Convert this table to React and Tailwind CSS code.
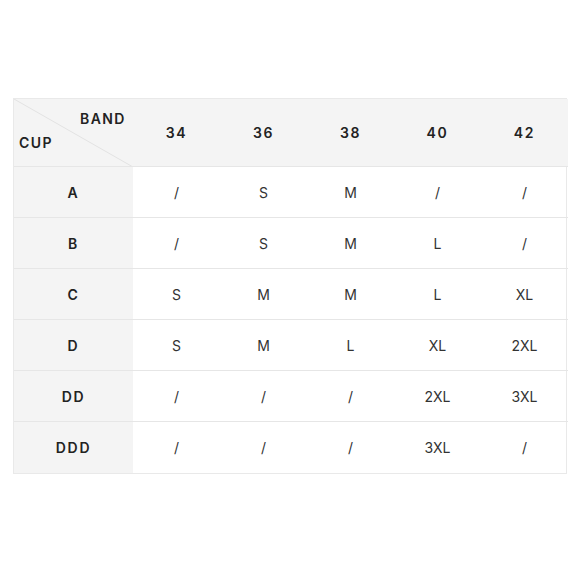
const bands = ['34', '36', '38', '40', '42']

const rows = [
  { cup: 'A', sizes: ['/', 'S', 'M', '/', '/'] },
  { cup: 'B', sizes: ['/', 'S', 'M', 'L', '/'] },
  { cup: 'C', sizes: ['S', 'M', 'M', 'L', 'XL'] },
  { cup: 'D', sizes: ['S', 'M', 'L', 'XL', '2XL'] },
  { cup: 'DD', sizes: ['/', '/', '/', '2XL', '3XL'] },
  { cup: 'DDD', sizes: ['/', '/', '/', '3XL', '/'] },
]

export default function App() {
  return (
    <div className="w-[580px] h-[580px] bg-white pt-[98px] pl-[13px] font-['Inter',sans-serif]">
      <div className="w-[554px] border border-[#e9e9e9] grid grid-cols-[119px_repeat(5,87px)]">
        {/* header */}
        <div className="relative h-[68px] bg-[#f4f4f4] border-b border-[#e6e6e6] overflow-hidden">
          <svg className="absolute inset-0" width="119" height="68" viewBox="0 0 119 68">
            <line x1="0" y1="0" x2="119" y2="68" stroke="#e2e2e2" strokeWidth="1" />
          </svg>
          <span className="absolute left-[66px] top-[9px] text-[14px] font-semibold tracking-[0.1em] text-[#222]">BAND</span>
          <span className="absolute left-[5px] top-[33px] text-[14px] font-semibold tracking-[0.1em] text-[#222]">CUP</span>
        </div>
        {bands.map(b => (
          <div key={b} className="h-[68px] bg-[#f4f4f4] border-b border-[#e6e6e6] flex items-center justify-center text-[14px] font-semibold tracking-[0.12em] text-[#222]">
            {b}
          </div>
        ))}

        {/* body */}
        {rows.map((r, i) => (
          <div key={r.cup} className="contents">
            <div className={`h-[51px] bg-[#f4f4f4] flex items-center justify-center text-[14px] font-semibold tracking-[0.12em] text-[#222] ${i < rows.length - 1 ? 'border-b border-[#e6e6e6]' : ''}`}>
              {r.cup}
            </div>
            {r.sizes.map((s, j) => (
              <div key={j} className={`h-[51px] flex items-center justify-center text-[14px] text-[#333] ${i < rows.length - 1 ? 'border-b border-[#e6e6e6]' : ''}`}>
                {s}
              </div>
            ))}
          </div>
        ))}
      </div>
    </div>
  )
}
